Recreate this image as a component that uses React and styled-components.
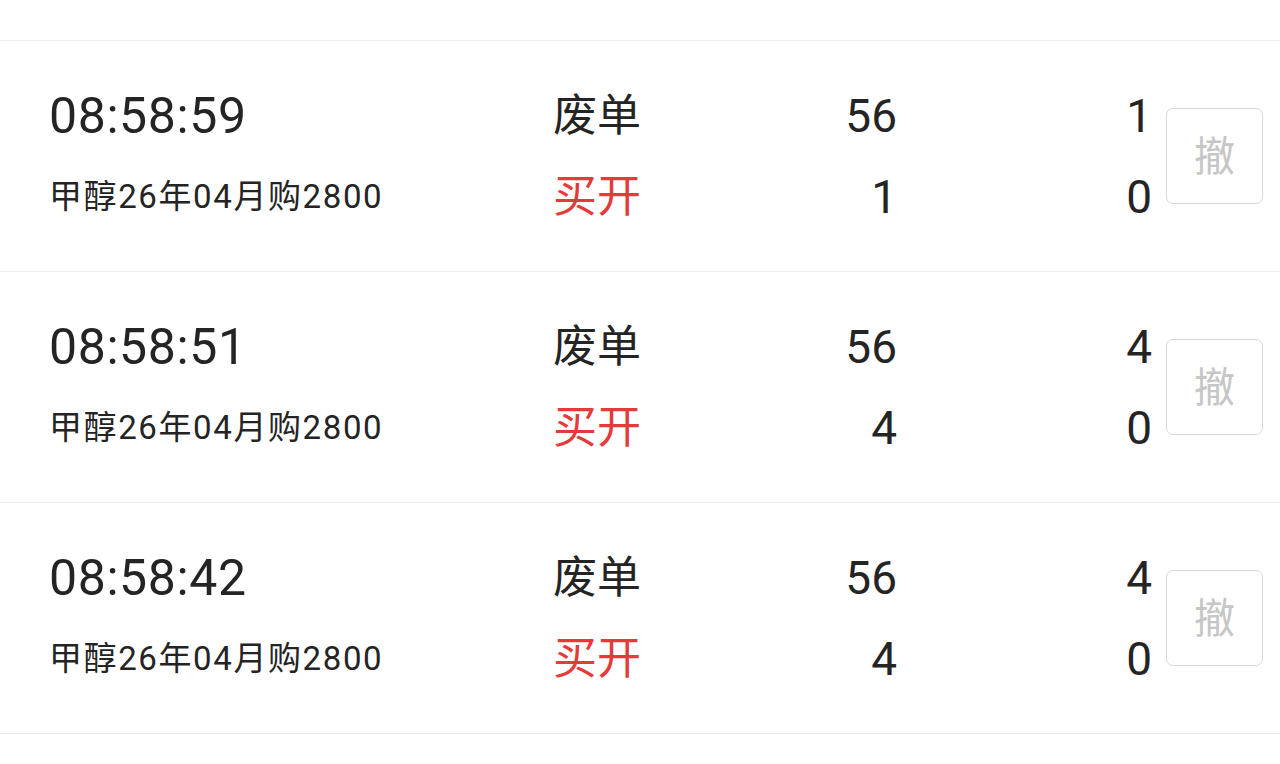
import React from "react";
import styled, { createGlobalStyle } from "styled-components";

const GlobalStyle = createGlobalStyle`
  html, body { margin: 0; padding: 0; background: #ffffff; }
  body { font-family: Roboto, "Noto Sans CJK SC", sans-serif; color: #242424; }
`;

const List = styled.div`
  width: 1280px;
  background: #fff;
`;

const TopSpacer = styled.div`
  height: 40px;
  border-bottom: 1px solid #eeeeee;
`;

const Row = styled.div`
  display: grid;
  grid-template-columns: 504px 147px 197px 255px 111px;
  align-items: center;
  height: 230px;
  padding: 0 17px 0 49px;
  border-bottom: 1px solid #eeeeee;
`;

const Stack = styled.div`
  display: flex;
  flex-direction: column;
  gap: 21px;
  align-items: ${(p) => (p.$right ? "flex-end" : "flex-start")};
`;

const Line = styled.div`
  height: 60px;
  box-sizing: border-box;
  display: flex;
  align-items: center;
  white-space: nowrap;
  font-family: Roboto, "Noto Sans CJK SC", sans-serif;
  font-size: ${(p) => p.$size}px;
  letter-spacing: ${(p) => p.$spacing || 0}px;
  color: ${(p) => p.$color || "#242424"};
  padding-bottom: ${(p) => p.$lift || 0}px;
`;

const ButtonCell = styled.div`
  display: flex;
  justify-content: flex-end;
`;

const CancelButton = styled.button`
  width: 97px;
  height: 96px;
  box-sizing: border-box;
  border: 1.5px solid #d8d8d8;
  border-radius: 7px;
  background: #fff;
  color: #c6c6c6;
  font-family: "Noto Sans CJK SC", sans-serif;
  font-size: 41px;
  padding: 0 0 6px;
  display: flex;
  align-items: center;
  justify-content: center;
`;

const rows = [
  { time: "08:58:59", a: "56", b: "1", c: "1", d: "0" },
  { time: "08:58:51", a: "56", b: "4", c: "4", d: "0" },
  { time: "08:58:42", a: "56", b: "4", c: "4", d: "0" },
];

export default function App() {
  return (
    <>
      <GlobalStyle />
      <List>
        <TopSpacer />
        {rows.map((r) => (
          <Row key={r.time}>
            <Stack>
              <Line $size={50} $spacing={0.6}>{r.time}</Line>
              <Line $size={33} $spacing={1.6} $lift={5}>甲醇26年04月购2800</Line>
            </Stack>
            <Stack>
              <Line $size={44} $lift={8}>废单</Line>
              <Line $size={44} $lift={8} $color="#e53a3a">买开</Line>
            </Stack>
            <Stack $right>
              <Line $size={46}>{r.a}</Line>
              <Line $size={46}>{r.b}</Line>
            </Stack>
            <Stack $right>
              <Line $size={46}>{r.c}</Line>
              <Line $size={46}>{r.d}</Line>
            </Stack>
            <ButtonCell>
              <CancelButton>撤</CancelButton>
            </ButtonCell>
          </Row>
        ))}
      </List>
    </>
  );
}
